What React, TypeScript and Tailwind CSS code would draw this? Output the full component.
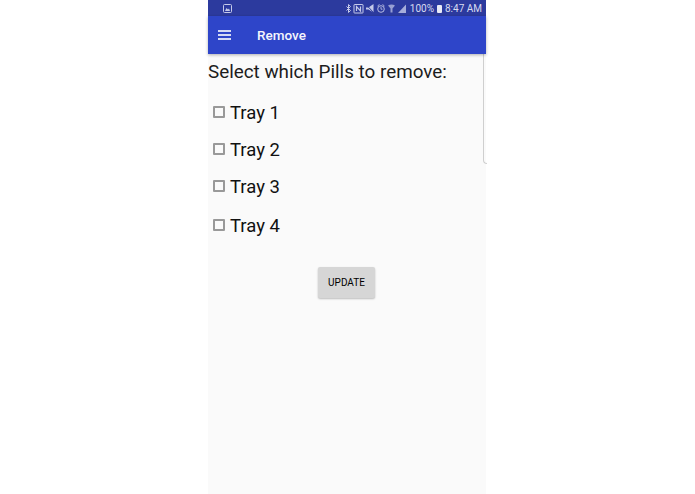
const font = { fontFamily: "Roboto, sans-serif" };

function Tray({ label, className }: { label: string; className: string }) {
  return (
    <div className={"flex items-center " + className}>
      <span className="ml-[5px] mb-[3px] w-3 h-3 border-2 border-[#999] rounded-[1px] bg-[#fafafa]"></span>
      <span className="ml-[5px] text-[18.5px] leading-6 text-[#111]">{label}</span>
    </div>
  );
}

function StatusIcons() {
  return (
    <svg width="61" height="11" viewBox="0 0 61 11" fill="none" className="text-[#c5cae9]">
      {/* bluetooth */}
      <path d="M0.500 3.500l4 4-2 2V1.500l2 2-4 4" stroke="currentColor" strokeWidth="1" />
      {/* nfc */}
      <rect x="8" y="1.500" width="9" height="8.500" rx="0.500" stroke="currentColor" strokeWidth="1" />
      <path d="M10.500 8V3.500l4 4.500V3.500" stroke="currentColor" strokeWidth="1.200" />
      {/* mute */}
      <path d="M20 4.500h2.500l5-3.500v8.500l-5-3h-2.500z" fill="currentColor" />
      <path d="M20 1.500l8 8.500" stroke="#303f9f" strokeWidth="1" />
      {/* alarm */}
      <circle cx="35" cy="6" r="3.300" stroke="currentColor" strokeWidth="0.900" />
      <path d="M35 4v2.200h1.500M31.500 3l2-1.500M38.500 3l-2-1.500" stroke="currentColor" strokeWidth="0.800" />
      {/* wifi */}
      <path d="M42 2.500c2-1.500 5-1.500 7 0l-2.500 3v4h-2v-4z" fill="currentColor" opacity="0.7" />
      {/* signal */}
      <path d="M52 10l8-8.500v8.500z" fill="currentColor" opacity="0.8" />
    </svg>
  );
}

export default function App() {
  return (
    <div className="w-[695px] h-[494px] bg-white flex justify-center overflow-hidden" style={font}>
      <div className="w-[278px] h-[494px] ml-[-1px] flex flex-col bg-[#fafafa]">
        <div className="h-4 shrink-0 bg-[#2c3a9e] flex items-center pl-[15px] pr-[4px]">
          <svg width="9" height="9" viewBox="0 0 9 9" fill="none">
            <rect x="0.500" y="0.500" width="8" height="8" rx="1" stroke="#c5cae9" />
            <path d="M2 7l1.500-3 1.500 1.500 1-1 1 2.500z" fill="#c5cae9" />
          </svg>
          <div className="ml-auto pt-[1px] flex items-center text-[10px] leading-4 text-[#d8dcf0]">
            <StatusIcons />
            <span className="ml-[3px]">100%</span>
            <span className="ml-[3px] w-[5px] h-[8px] bg-[#e8eaf6] rounded-[1px]"></span>
            <span className="ml-[3px]">8:47 AM</span>
          </div>
        </div>
        <div className="h-[38px] shrink-0 bg-[#2e45c9] flex items-center pl-[10px] shadow-[0_1px_3px_rgba(0,0,0,0.3)] z-10">
          <div className="w-[13px] flex flex-col gap-[2px]">
            <span className="h-[2px] bg-white/80"></span>
            <span className="h-[2px] bg-white/80"></span>
            <span className="h-[2px] bg-white/80"></span>
          </div>
          <span className="ml-[26px] text-[13.5px] font-medium text-[#f4f5fc]">Remove</span>
        </div>
        <div className="relative flex-1 flex flex-col">
          <div className="absolute right-[-1px] top-[0px] w-[4px] h-[110px] border-l border-b border-[#cfcfcf] rounded-bl-[4px]"></div>
          <p className="mt-[6px] text-[18.85px] leading-[24px] text-[#1c1c1c] whitespace-nowrap">Select which Pills to remove:</p>
          <Tray label="Tray 1" className="mt-[17px]" />
          <Tray label="Tray 2" className="mt-[13px]" />
          <Tray label="Tray 3" className="mt-[13px]" />
          <Tray label="Tray 4" className="mt-[15px]" />
          <button className="self-start ml-[110px] mt-[29px] w-[57px] h-[31px] bg-[#d6d6d6] rounded-[2px] text-[10px] font-normal text-black shadow-[0_1px_2px_rgba(0,0,0,0.25)]">
            UPDATE
          </button>
        </div>
      </div>
    </div>
  );
}
